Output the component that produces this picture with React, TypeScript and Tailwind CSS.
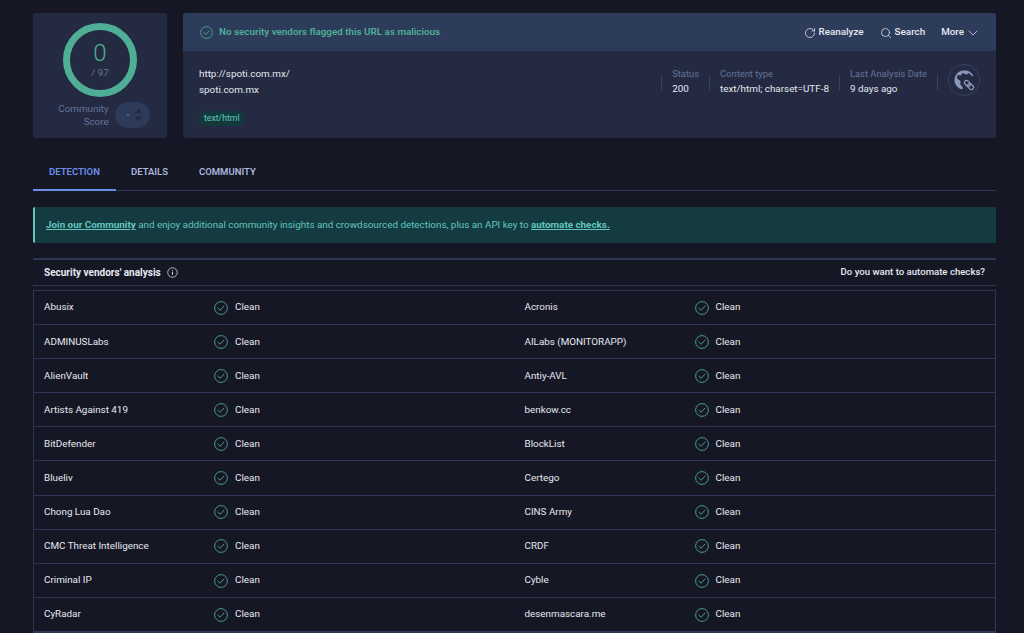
import React from 'react';
import { RotateCw, Search, ChevronDown } from 'lucide-react';

const vendors: [string, string][] = [
  ['Abusix', 'Acronis'],
  ['ADMINUSLabs', 'AILabs (MONITORAPP)'],
  ['AlienVault', 'Antiy-AVL'],
  ['Artists Against 419', 'benkow.cc'],
  ['BitDefender', 'BlockList'],
  ['Blueliv', 'Certego'],
  ['Chong Lua Dao', 'CINS Army'],
  ['CMC Threat Intelligence', 'CRDF'],
  ['Criminal IP', 'Cyble'],
  ['CyRadar', 'desenmascara.me'],
];

const CheckCircle = ({ className }: { className: string }) => (
  <svg viewBox="0 0 16 16" fill="none" stroke="currentColor" strokeWidth="1" className={className}>
    <circle cx="8" cy="8" r="7.3" />
    <path d="M4.6 8.2 7 10.6l4.4-4.8" strokeLinecap="round" strokeLinejoin="round" />
  </svg>
);

const GlobeLink = () => (
  <svg viewBox="0 0 32 32" className="w-[32px] h-[32px]">
    <circle cx="16" cy="16" r="15.5" fill="none" stroke="#39445f" />
    <path d="M16 6.5a9.5 9.5 0 0 0-7.6 15.2c1.4 1.9 3.5 3.3 5.9 3.7l.5-1.8-2.6-3.3.4-3.2-3.6-2.6.6-3.4 3.2.4 1.6-2.4 4.2 1.5 2.4-1.7 3.2 3.4 1.2-.3A9.5 9.5 0 0 0 16 6.5Z" fill="#8a97b8" />
    <g fill="none" stroke="#8a97b8" strokeWidth="1.3" transform="rotate(45 21 21)">
      <rect x="15.5" y="18.8" width="6.5" height="4.4" rx="2.2" />
      <rect x="20" y="18.8" width="6.5" height="4.4" rx="2.2" />
    </g>
  </svg>
);

const Meta = ({ label, value }: { label: string; value: string }) => (
  <div className="flex flex-col gap-[4px] leading-[11px]">
    <span className="text-[#64759b] text-[9.4px]">{label}</span>
    <span className="text-[#e6e9f0]">{value}</span>
  </div>
);

const Divider = () => <div className="w-px h-[15px] bg-[#39445f]" />;

export default function App() {
  return (
    <div className="h-[633px] overflow-hidden bg-[#161725] pl-[33px] pr-[28px] pt-[13px] text-[9.85px] text-[#e6e9f0] font-['Roboto','Noto_Sans',sans-serif]">
      <div className="flex gap-[16px] h-[125px]">
        <div className="w-[134px] bg-[#232a41] rounded-[3px] flex flex-col items-center pt-[10px]">
          <div className="w-[74px] h-[74px] rounded-full border-[7px] border-[#4fae95] flex flex-col items-center justify-center">
            <span className="text-[24px] leading-[26px] font-light text-[#4fae95]">0</span>
            <span className="text-[#64759b] leading-[13px] mb-[1px]">/ 97</span>
          </div>
          <div className="flex items-center gap-[6px] mt-[5px] ml-[8px]">
            <div className="text-right leading-[13px] text-[#64759b]">
              Community
              <br />
              Score
            </div>
            <div className="w-[35px] h-[26px] rounded-full bg-[#2d3a5a] flex items-center justify-end pr-[8px] relative">
              <span className="absolute left-[12px] top-[12px] w-[2px] h-[2px] rounded-full bg-[#64759b]" />
              <svg viewBox="0 0 8 16" className="w-[7px] h-[14px]" fill="#1f2a45">
                <path d="M4 1 8 6H0ZM4 15 0 10h8Z" />
              </svg>
            </div>
          </div>
        </div>

        <div className="flex-1 bg-[#232a41] rounded-[3px] overflow-hidden flex flex-col">
          <div className="h-[38px] bg-[#2d3c5b] flex items-center pl-[17px] pr-[15px] pt-[1px]">
            <CheckCircle className="w-[13px] h-[13px] text-[#4fae95] mr-[6px]" />
            <span className="font-semibold text-[#4fae95]">No security vendors flagged this URL as malicious</span>
            <div className="ml-auto flex items-center">
              <RotateCw size={12} strokeWidth={1.5} className="text-[#e6e9f0]" />
              <span className="font-medium ml-[3px] mr-[16px]">Reanalyze</span>
              <Search size={12} strokeWidth={1.5} className="text-[#e6e9f0]" />
              <span className="font-medium ml-[3px] mr-[16px]">Search</span>
              <span className="font-medium mr-[1px]">More</span>
              <ChevronDown size={16} strokeWidth={1.1} className="text-[#e6e9f0]" />
            </div>
          </div>
          <div className="flex pl-[16px] pr-[16px] pt-[17px]">
            <div className="flex flex-col">
              <span className="leading-[11px]">http://spoti.com.mx/</span>
              <span className="leading-[11px] mt-[5px]">spoti.com.mx</span>
              <span className="mt-[16px] self-start h-[15px] leading-[15px] px-[5px] rounded-full bg-[#123a3d] text-[#62c6c0] text-[8.7px]">text/html</span>
            </div>
            <div className="ml-auto flex items-start gap-[10px]">
              <div className="mt-[7px]"><Divider /></div>
              <Meta label="Status" value="200" />
              <div className="mt-[7px]"><Divider /></div>
              <Meta label="Content type" value="text/html; charset=UTF-8" />
              <div className="mt-[7px]"><Divider /></div>
              <Meta label="Last Analysis Date" value="9 days ago" />
              <div className="mt-[7px]"><Divider /></div>
              <div className="-mt-[4px]"><GlobeLink /></div>
            </div>
          </div>
        </div>
      </div>

      <div className="flex h-[53px] border-b border-[#2d3654] items-end">
        <div className="w-[83px] h-[36px] flex items-center justify-center font-semibold text-[9.5px] text-[#6b8fe8] border-b-2 border-[#6b8fe8] -mb-px">DETECTION</div>
        <div className="h-[35px] flex items-center ml-[15px] font-semibold text-[9.5px] text-[#a9b8dc]">DETAILS</div>
        <div className="h-[35px] flex items-center ml-[31px] font-semibold text-[9.5px] text-[#a9b8dc]">COMMUNITY</div>
      </div>

      <div className="mt-[16px] h-[36px] bg-[#143b3f] border-l-[2px] border-[#62c6c0] rounded-l-[2px] flex items-center pl-[11px] text-[#62c6c0]">
        <span className="font-bold underline">Join our Community</span>
        <span>&nbsp;and enjoy additional community insights and crowdsourced detections, plus an API key to&nbsp;</span>
        <span className="font-bold underline">automate checks.</span>
      </div>

      <div className="mt-[15px] h-[28px] border-t-2 border-b border-[#2d3654] flex items-center justify-between px-[11px] pb-[1px]">
        <div className="flex items-center">
          <span className="font-bold text-[10px]">Security vendors' analysis</span>
          <svg viewBox="0 0 12 12" className="w-[11px] h-[11px] ml-[6px]" fill="none" stroke="#e6e9f0" strokeWidth="0.8">
            <circle cx="6" cy="6" r="5.2" />
            <path d="M6 5.2v3.4M6 3.2v.9" strokeWidth="1" />
          </svg>
        </div>
        <span className="font-medium text-[9.6px]">Do you want to automate checks?</span>
      </div>

      <div className="mt-[4px] border border-[#2d3654]">
        {vendors.map(([left, right]) => (
          <div key={left} className="h-[34.1px] flex items-center border-b border-[#2d3654]">
            {[left, right].map((name) => (
              <div key={name} className="w-1/2 flex items-center pl-[10px] pt-[0.5px]">
                <span className="w-[170px]">{name}</span>
                <CheckCircle className="w-[14px] h-[14px] text-[#4fae95] mr-[7px]" />
                <span>Clean</span>
              </div>
            ))}
          </div>
        ))}
      </div>
    </div>
  );
}
